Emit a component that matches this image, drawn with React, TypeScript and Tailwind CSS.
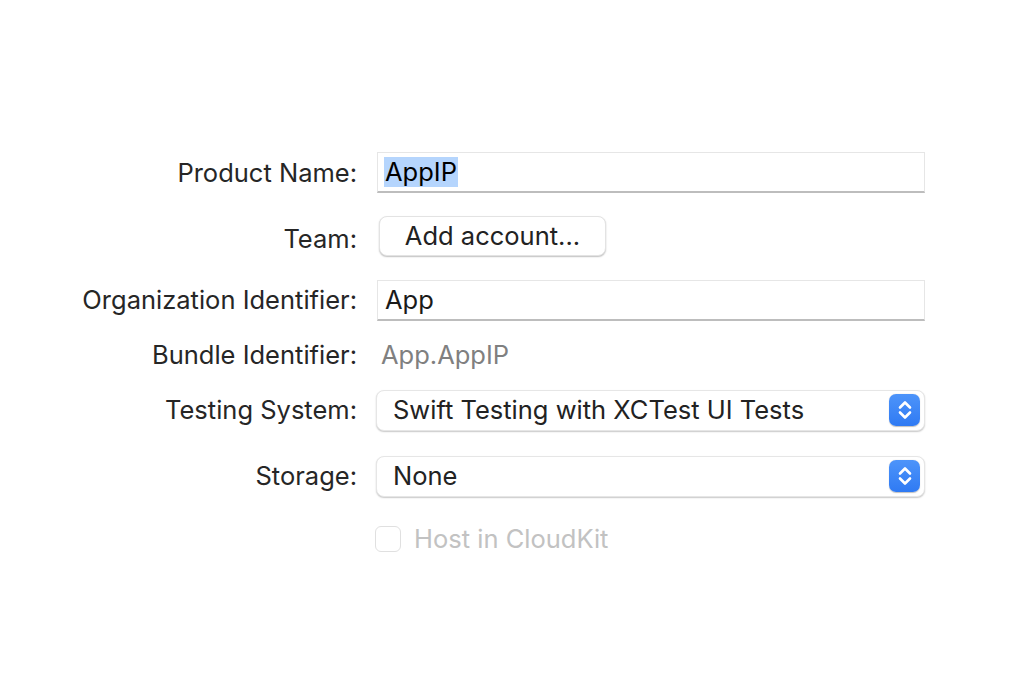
import React from "react";

const Stepper = () => (
    <div className="w-[31px] h-[32px] rounded-[7px] bg-gradient-to-b from-[#4d94fa] to-[#2f7af3] flex items-center justify-center shadow-[0_0.5px_1px_rgba(0,0,0,0.25)]">
        <svg width="16" height="24" viewBox="0 0 16 24" fill="none" stroke="white" strokeWidth="2.6" strokeLinecap="round" strokeLinejoin="round">
            <path d="M3 9.5 L8 4.5 L13 9.5" />
            <path d="M3 14.5 L8 19.5 L13 14.5" />
        </svg>
    </div>
);

const Label = ({ children }: { children: React.ReactNode }) => (
    <div className="w-[357px] shrink-0 text-right text-[#262626] whitespace-nowrap">{children}</div>
);

export default function App() {
    return (
        <div
            className="w-[1030px] h-[680px] bg-white text-[25.5px] leading-none pt-[152px]"
            style={{ fontFamily: "Inter, 'Noto Sans', sans-serif" }}
        >
            {/* Product Name */}
            <div className="flex items-center gap-[20px] h-[40px]">
                <Label><span className="relative top-[1px]">Product Name:</span></Label>
                <div className="w-[548px] h-[41px] bg-white border border-[#e6e6e6] border-b-[#bdbdbd] border-b-2 flex items-center pl-[6px]">
                    <span className="bg-[#b5d5fd] text-black h-[30px] flex items-center px-[1px]">AppIP</span>
                </div>
            </div>

            {/* Team */}
            <div className="flex items-center gap-[22px] h-[40px] mt-[24px]">
                <Label><span className="relative top-[3px]">Team:</span></Label>
                <button className="w-[227px] h-[40px] rounded-[8px] bg-white border border-[#e3e3e3] shadow-[0_1px_1.5px_rgba(0,0,0,0.25)] text-[#222] flex items-center justify-center">
                    Add account...
                </button>
            </div>

            {/* Organization Identifier */}
            <div className="flex items-center gap-[20px] h-[40px] mt-[24px]">
                <Label>Organization Identifier:</Label>
                <div className="w-[548px] h-[41px] bg-white border border-[#e6e6e6] border-b-[#bdbdbd] border-b-2 flex items-center pl-[7px] text-[#1a1a1a]">
                    App
                </div>
            </div>

            {/* Bundle Identifier */}
            <div className="flex items-center gap-[24px] h-[30px] mt-[20px]">
                <Label>Bundle Identifier:</Label>
                <span className="text-[#808080]">App.AppIP</span>
            </div>

            {/* Testing System */}
            <div className="flex items-center gap-[19px] h-[40px] mt-[20px]">
                <Label>Testing System:</Label>
                <div className="w-[549px] h-[41px] rounded-[8px] bg-white border border-[#e6e6e6] shadow-[0_1px_1.5px_rgba(0,0,0,0.22)] flex items-center justify-between pl-[16px] pr-[4px] text-[#222]">
                    <span>Swift Testing with XCTest UI Tests</span>
                    <Stepper />
                </div>
            </div>

            {/* Storage */}
            <div className="flex items-center gap-[19px] h-[40px] mt-[26px]">
                <Label>Storage:</Label>
                <div className="w-[549px] h-[41px] rounded-[8px] bg-white border border-[#e6e6e6] shadow-[0_1px_1.5px_rgba(0,0,0,0.22)] flex items-center justify-between pl-[16px] pr-[4px] text-[#222]">
                    <span>None</span>
                    <Stepper />
                </div>
            </div>

            {/* Host in CloudKit */}
            <div className="flex items-center h-[30px] mt-[28px] pl-[375px] gap-[13px]">
                <div className="w-[26px] h-[26px] rounded-[6px] border border-[#e0e0e0] bg-white" />
                <span className="text-[#c2c2c2]">Host in CloudKit</span>
            </div>
        </div>
    );
}
